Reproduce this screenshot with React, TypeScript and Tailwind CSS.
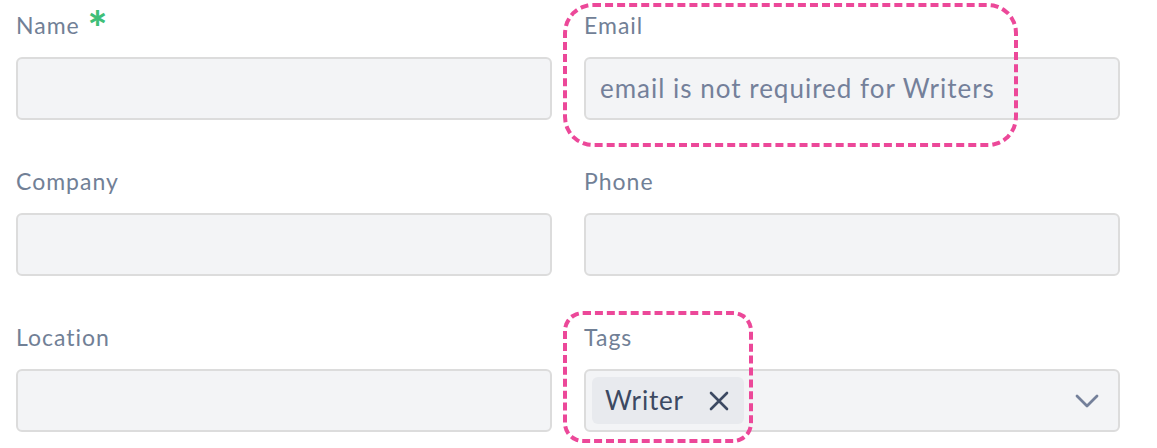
import { ReactNode } from "react";

const font = { fontFamily: "Lato, 'Open Sans', sans-serif" };

function Field({ label, children, required }: { label: string; children?: ReactNode; required?: boolean }) {
  return (
    <div className="flex flex-col">
      <div className="flex items-start h-[30px] mb-[17px] text-[23px] leading-[30px] tracking-[1px] text-[#718096]">
        {label}
        {required && <span className="ml-[8px] -mt-[1px] text-[46px] leading-[38px] font-black text-[#3fbf78]">*</span>}
      </div>
      <div className="relative flex items-center h-[63px] rounded-[6px] border-2 border-[#dcdcdc] bg-[#f3f4f6]">
        {children}
      </div>
    </div>
  );
}

export default function App() {
  return (
    <div className="relative min-h-screen bg-white" style={font}>
      <div className="grid grid-cols-2 gap-x-[32px] gap-y-[46px] px-[16px] pt-[10px] w-[1136px]">
        <Field label="Name" required />
        <Field label="Email">
          <span className="pl-[14px] text-[26px] tracking-[1px] text-[#74809a]">email is not required for Writers</span>
        </Field>
        <Field label="Company" />
        <Field label="Phone" />
        <Field label="Location" />
        <Field label="Tags">
          <div className="ml-[6px] flex items-center h-[47px] rounded-[6px] bg-[#e8eaee] pl-[13px] pr-[14px]">
            <span className="text-[26px] tracking-[0.8px] text-[#3c4962]">Writer</span>
            <svg className="ml-[24px]" width="22" height="22" viewBox="0 0 22 22" fill="none" stroke="#3c4962" strokeWidth="2.6" strokeLinecap="round">
              <path d="M3 3l16 16M19 3L3 19" />
            </svg>
          </div>
          <svg className="absolute right-[19px]" width="24" height="14" viewBox="0 0 24 14" fill="none" stroke="#74809a" strokeWidth="2.8" strokeLinecap="round" strokeLinejoin="round">
            <path d="M2 2l10 10L22 2" />
          </svg>
        </Field>
      </div>
      <div className="absolute left-[563px] top-[3px] w-[455px] h-[144px] rounded-[30px] border-4 border-dashed border-[#ec4899]" />
      <div className="absolute left-[563px] top-[311px] w-[190px] h-[132px] rounded-[20px] border-4 border-dashed border-[#ec4899]" />
    </div>
  );
}
